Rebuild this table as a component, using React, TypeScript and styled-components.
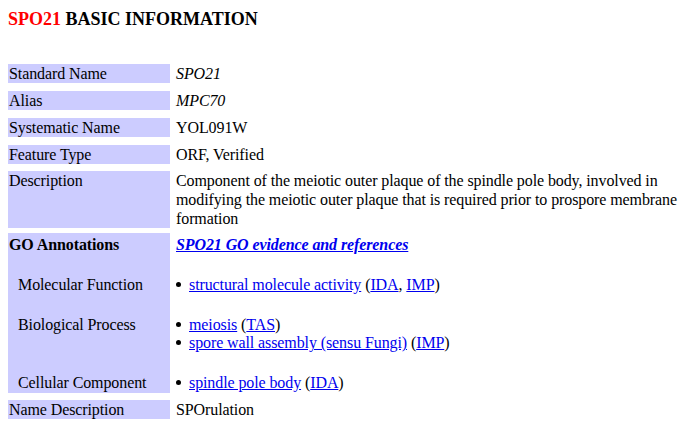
import React from "react";
import styled, { createGlobalStyle } from "styled-components";

const GlobalStyle = createGlobalStyle`
  body {
    margin: 8px;
    background: #ffffff;
  }

  #root,
  #root * {
    font-family: "Liberation Serif", "Times New Roman", serif;
  }
`;

const Page = styled.div`
  color: #000000;
  font-size: 16px;
  letter-spacing: -0.1px;
`;

const Heading = styled.h3`
  margin: 0 0 34px;
  padding-top: 1px;
  font-size: 18px;
  font-weight: bold;
  line-height: 21px;
  letter-spacing: 0;
`;

const GeneName = styled.span`
  color: #ff0000;
`;

const Table = styled.div`
  display: flex;
  flex-direction: column;
`;

interface RowProps {
  $space?: number;
}

const Row = styled.div<RowProps>`
  display: grid;
  grid-template-columns: 162px 1fr;
  column-gap: 5px;
  margin-top: ${props => props.$space ?? 8}px;
  line-height: 19px;

  &:first-child {
    margin-top: 0;
  }
`;

interface LabelProps {
  $bold?: boolean;
  $indent?: boolean;
  $pad?: number;
}

const Label = styled.div<LabelProps>`
  background: #ccccff;
  padding: ${props => props.$pad ?? 0}px 1px 0 ${props => (props.$indent ? 10 : 1)}px;
  font-weight: ${props => (props.$bold ? "bold" : "normal")};
`;

interface ValueProps {
  $pad?: number;
}

const Value = styled.div<ValueProps>`
  padding: ${props => props.$pad ?? 0}px 1px 0;
`;

const GoBlock = styled.div`
  display: grid;
  grid-template-columns: 162px 1fr;
  column-gap: 5px;
  margin-top: 5px;
  line-height: 18.4px;
`;

const Link = styled.a`
  color: #0000ee;
  text-decoration: underline;
`;

const GoLink = styled(Link)`
  font-weight: bold;
  font-style: italic;
`;

const List = styled.ul`
  list-style: none;
  margin: 0;
  padding: 0;
`;

const Item = styled.li`
  &::before {
    content: "";
    display: inline-block;
    width: 5px;
    height: 5px;
    border-radius: 50%;
    background: #000000;
    margin: 0 8px 0 0;
    vertical-align: 3px;
  }
`;

const Evidence = ({ codes }: { codes: string[] }) => (
  <>
    {" ("}
    {codes.map((c, i) => (
      <React.Fragment key={c}>
        {i > 0 && ", "}
        <Link href="#">{c}</Link>
      </React.Fragment>
    ))}
    {")"}
  </>
);

const goRows = [
  {
    label: "Molecular Function",
    terms: [{ name: "structural molecule activity", codes: ["IDA", "IMP"] }],
  },
  {
    label: "Biological Process",
    terms: [
      { name: "meiosis", codes: ["TAS"] },
      { name: "spore wall assembly (sensu Fungi)", codes: ["IMP"] },
    ],
  },
  {
    label: "Cellular Component",
    terms: [{ name: "spindle pole body", codes: ["IDA"] }],
  },
];

const App = () => {
  return (
    <Page>
      <GlobalStyle />
      <Heading>
        <GeneName>SPO21</GeneName> BASIC INFORMATION
      </Heading>
      <Table>
        <Row>
          <Label>Standard Name</Label>
          <Value>
            <i>SPO21</i>
          </Value>
        </Row>
        <Row>
          <Label>Alias</Label>
          <Value>
            <i>MPC70</i>
          </Value>
        </Row>
        <Row>
          <Label>Systematic Name</Label>
          <Value>YOL091W</Value>
        </Row>
        <Row>
          <Label>Feature Type</Label>
          <Value>ORF, Verified</Value>
        </Row>
        <Row $space={7}>
          <Label>Description</Label>
          <Value>
            Component of the meiotic outer plaque of the spindle pole body, involved in
            modifying the meiotic outer plaque that is required prior to prospore membrane
            formation
          </Value>
        </Row>
        <GoBlock>
          <Label $bold $pad={3}>
            GO Annotations
          </Label>
          <Value $pad={3}>
            <GoLink href="#">SPO21 GO evidence and references</GoLink>
          </Value>
          {goRows.map(row => (
            <React.Fragment key={row.label}>
              <Label $indent $pad={21.5}>
                {row.label}
              </Label>
              <Value $pad={21.5}>
                <List>
                  {row.terms.map(t => (
                    <Item key={t.name}>
                      <Link href="#">{t.name}</Link>
                      <Evidence codes={t.codes} />
                    </Item>
                  ))}
                </List>
              </Value>
            </React.Fragment>
          ))}
        </GoBlock>
        <Row $space={7}>
          <Label>Name Description</Label>
          <Value>SPOrulation</Value>
        </Row>
      </Table>
    </Page>
  );
};

export default App;
